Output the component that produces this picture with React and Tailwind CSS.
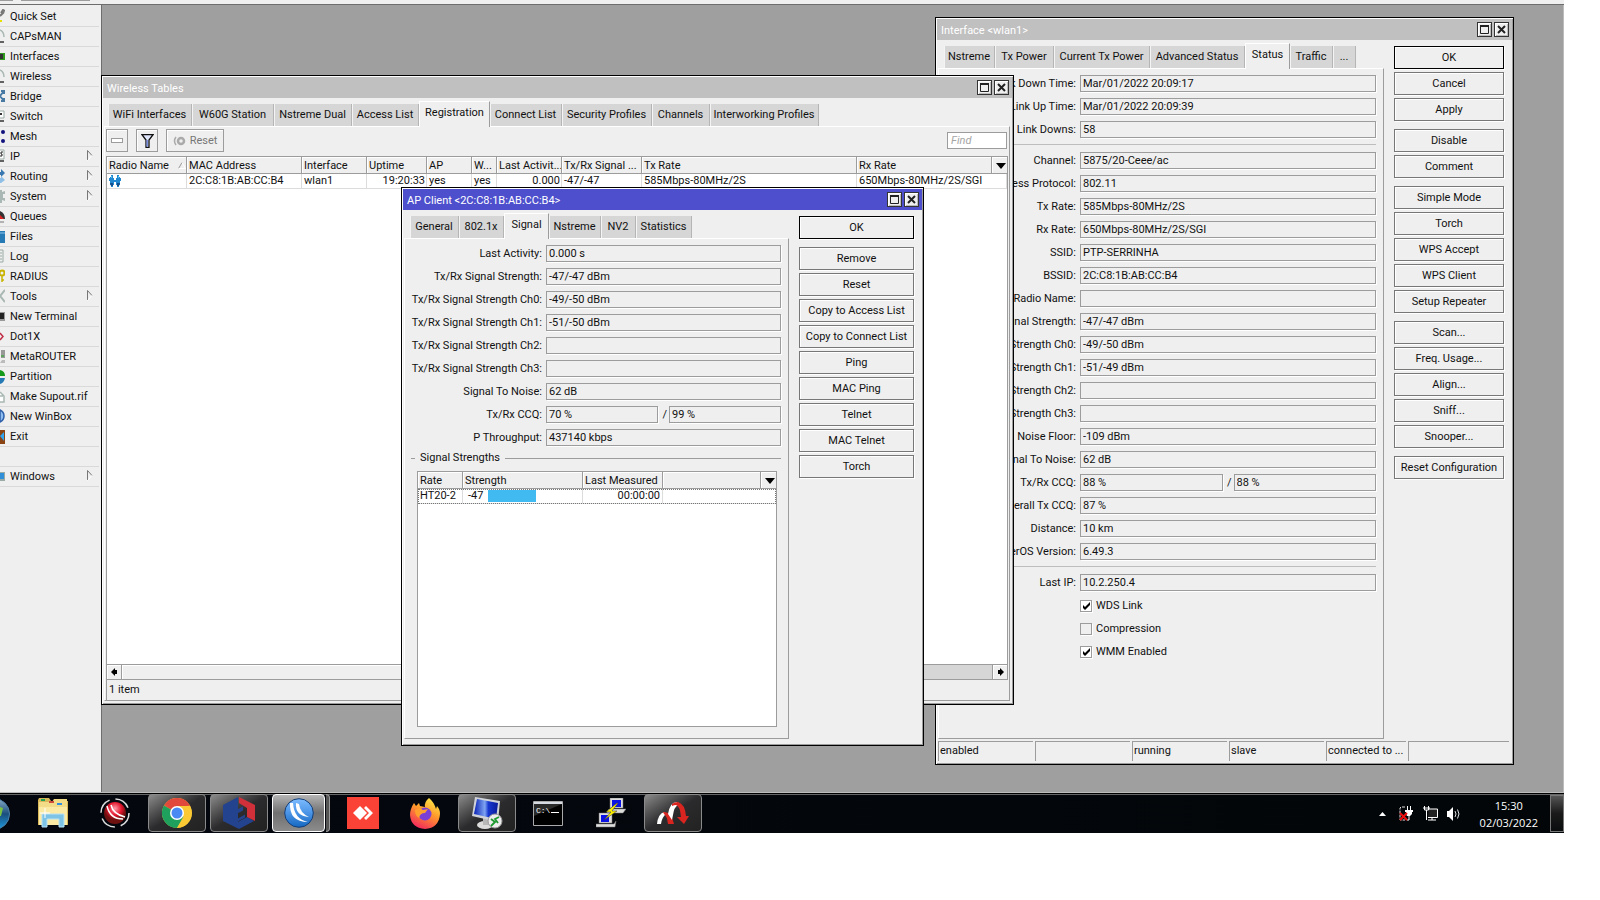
import React from 'react';
import clsx from 'clsx';

const ICONS = {
  quick: <><path d="M0 7l4-4M1 4l2-3 2 1" stroke="#777" strokeWidth="2" fill="none" /><path d="M0 12h2" stroke="#e6e000" strokeWidth="2" /></>,
  arc: <><path d="M0 1q4 2 4 7" stroke="#a9b8b4" strokeWidth="1.5" fill="none" /><path d="M0 13h4" stroke="#333" strokeWidth="1.5" /></>,
  card: <><path d="M0 4h5v7H0z" fill="#2f9a1c" /><path d="M0 5h3v5H0z" fill="#333" /></>,
  bridge: <path d="M0 7l4-5M0 7l4 5M1 2h3v3M1 12h3V9" stroke="#4779a3" strokeWidth="2" fill="none" />,
  box: <><path d="M0 2h4v7H0" fill="#fff" stroke="#9aaba6" /><path d="M0 5h2" stroke="#333" strokeWidth="2" /><path d="M0 12h4" stroke="#333" strokeWidth="1.5" /></>,
  mesh: <><circle cx="3" cy="3" r="2" fill="#12127e" /><circle cx="3" cy="12" r="2" fill="#12127e" /></>,
  ip: <><path d="M0 1h4v9H0" fill="#fff" stroke="#9aaba6" /><path d="M3 3H1v2h1v2H0" stroke="#222" fill="none" /><path d="M0 12h4" stroke="#333" strokeWidth="1.5" /></>,
  routing: <><path d="M0 3h1V0l4 4-4 4V6H0z" fill="#3a78b0" /><path d="M0 9h1V7l4 4-4 3H0z" fill="#8fbfe6" /></>,
  gear: <path d="M0 1h2v2l3-1v3H3v4h2v3l-3-1v3H0" fill="#a9b8b4" />,
  queues: <><path d="M0 2q5 2 5 8H0z" fill="#333" /><path d="M0 6l4 4H0z" fill="#d22" /><path d="M0 13h4" stroke="#777" /></>,
  files: <><path d="M0 2h5v12H0z" fill="#2579b5" /><path d="M0 4h5" stroke="#8cc4ea" /></>,
  log: <path d="M0 1h3v12H0M0 4h2M0 7h2M0 10h2" stroke="#9aaba6" fill="none" />,
  key: <><circle cx="2" cy="4" r="2.5" fill="none" stroke="#c8b400" strokeWidth="2" /><path d="M2 6v7M2 11h2" stroke="#c8b400" strokeWidth="1.5" /></>,
  tools: <path d="M5 1L0 7l5 6" stroke="#a9b8b4" strokeWidth="2" fill="none" />,
  term: <><path d="M0 3h5v9H0z" fill="#999" /><path d="M0 4h4v6H0z" fill="#222" /></>,
  dot: <path d="M0 4l3 3.500-3 3.500" stroke="#c23048" strokeWidth="1.5" fill="none" />,
  meta: <><path d="M1 1h4v8H1z" fill="#999" /><path d="M1 7h3" stroke="#2a2" /><path d="M0 14l2-3h3v3z" fill="#bbb" /></>,
  part: <><path d="M0 1q5 1 5 6H0z" fill="#159a1c" /><path d="M0 9h5q-1 5-5 6z" fill="#2579b5" /></>,
  sup: <path d="M0 3l4 4v6H0M0 7h3" stroke="#a9b8b4" strokeWidth="1.5" fill="#fff" />,
  winbox: <path d="M0 1q4 2 4 6t-4 6z" fill="#8ebdf2" stroke="#2e5fa8" strokeWidth="1.5" />,
  exit: <><path d="M0 1h5v14H0z" fill="#8a4413" /><path d="M0 7l4-4v9z" fill="#2fa3ee" /></>,
  win: <><path d="M0 3h5v9H0z" fill="#9aaba6" /><path d="M0 4h4v6H0z" fill="#2f8fd8" /></>,
};

const MENU = [
  ['Quick Set', 'quick'], ['CAPsMAN', 'arc'], ['Interfaces', 'card'], ['Wireless', 'arc'],
  ['Bridge', 'bridge'], ['Switch', 'box'], ['Mesh', 'mesh'], ['IP', 'ip', true],
  ['Routing', 'routing', true], ['System', 'gear', true], ['Queues', 'queues'], ['Files', 'files'],
  ['Log', 'log'], ['RADIUS', 'key'], ['Tools', 'tools', true], ['New Terminal', 'term'],
  ['Dot1X', 'dot'], ['MetaROUTER', 'meta'], ['Partition', 'part'], ['Make Supout.rif', 'sup'],
  ['New WinBox', 'winbox'], ['Exit', 'exit'], null, ['Windows', 'win', true],
];

const Sidebar = () => (
  <nav className="w-[102px] shrink-0 border-r border-[#6d6d6d] bg-[#efefef] pt-[2px] pr-[2px]">
    {MENU.map((item, i) => (
      <div key={i} className="h-5 border-b border-[#d9d9d9]">
        {item && (
          <button type="button" className="flex h-[19px] w-full items-center gap-[5px] text-left">
            <svg width="5" height="15" viewBox="0 0 5 15">{ICONS[item[1]]}</svg>
            <span className="flex-1">{item[0]}</span>
            {item[2] && (
              <svg width="6" height="11" viewBox="0 0 6 11" className="mr-[6px] mb-[2px]">
                <path d="M.5 10V.5l4.500 5" fill="none" stroke="#777" />
                <path d="M5 5.500L.5 10.500" stroke="#fff" />
              </svg>
            )}
          </button>
        )}
      </div>
    ))}
  </nav>
);

const TitleButton = ({ label, children }) => (
  <button type="button" aria-label={label} className="flex size-[15px] items-center justify-center border border-[#333] bg-[#efefef] shadow-[inset_1px_1px_0_#fff,inset_-1px_-1px_0_#bbb]">
    {children}
  </button>
);

const Window = ({ title, active, className, children }) => (
  <section className={clsx('absolute flex flex-col border border-black bg-[#efefef] shadow-[inset_1px_1px_0_#fff,inset_-1px_-1px_0_#9c9c9c]', className)}>
    <header className={clsx('mx-px mt-px flex h-[21px] shrink-0 items-center gap-[2px] pl-[4px] pr-[3px] text-white', active ? 'bg-[#4d4fcc]' : 'bg-[#c0c0c0]')}>
      <h2 className="flex-1 pt-[3px]">{title}</h2>
      <TitleButton label="Maximize">
        <svg width="9" height="9" viewBox="0 0 9 9"><path d="M.5 1h8M.5 0v8.500h8V0" stroke="#222" fill="none" /><path d="M0 1h9" stroke="#222" strokeWidth="2" /></svg>
      </TitleButton>
      <TitleButton label="Close">
        <svg width="9" height="9" viewBox="0 0 9 9"><path d="M1 1l7 7M8 1L1 8" stroke="#222" strokeWidth="2" /></svg>
      </TitleButton>
    </header>
    {children}
  </section>
);

const Tabs = ({ items, selected }) => (
  <div role="tablist" className="flex h-[28px] shrink-0 items-end pl-[6px]">
    {items.map(([name, width]) => (
      <button
        key={name}
        type="button"
        role="tab"
        aria-selected={name === selected}
        className={clsx(
          'relative whitespace-nowrap',
          width,
          name === selected
            ? '-mb-px h-[26px] border-l border-t border-r border-l-white border-t-white border-r-[#9c9c9c] bg-[#efefef] pb-[4px]'
            : 'h-[22px] border-r border-[#b5b5b5] bg-[#d6d6d6] shadow-[inset_1px_0_0_#f4f4f4]'
        )}
      >
        {name}
      </button>
    ))}
  </div>
);

const ValueBox = (props) => (
  <input readOnly {...props} className="h-[17px] w-0 min-w-0 flex-1 border border-[#9c9c9c] bg-[#efefef] px-[2px] text-[#111] shadow-[1px_1px_0_#fff] outline-none" />
);

const Field = ({ prefix, label, value, second, labelWidth }) => {
  const id = `${prefix}-${label.replace(/\W+/g, '-')}`;
  return (
    <div className="flex items-center">
      <label htmlFor={id} className={clsx('shrink-0 whitespace-nowrap pr-[4px] text-right', labelWidth)}>{label}:</label>
      <ValueBox id={id} value={value} />
      {second !== undefined && (
        <>
          <span className="w-[11px] pr-[2px] text-right">/</span>
          <ValueBox aria-label={`${label} rx`} value={second} />
        </>
      )}
    </div>
  );
};

const ButtonGroups = ({ groups, className }) => (
  <div className={clsx('flex shrink-0 flex-col gap-2', className)}>
    {groups.map((group) => (
      <div key={group[0]} className="flex flex-col gap-[3px]">
        {group.map((name) => (
          <button
            key={name}
            type="button"
            className={clsx('h-[23px] border pt-px whitespace-nowrap shadow-[inset_1px_1px_0_#fff,1px_1px_0_#fff]', name === 'OK' ? 'border-black' : 'border-[#777]')}
          >
            {name}
          </button>
        ))}
      </div>
    ))}
  </div>
);

const DownArrow = () => (
  <svg width="10" height="6" viewBox="0 0 10 6" className="mx-auto"><path d="M0 0h10L5 6z" fill="#000" /></svg>
);

const TH = 'h-[17px] overflow-hidden border-r border-b border-[#9c9c9c] bg-[#efefef] p-0 pt-px pl-[2px] text-left font-normal whitespace-nowrap shadow-[inset_1px_1px_0_#fff]';
const TD = 'h-[15px] overflow-hidden border-r border-b border-[#dcdcdc] p-0 pl-[2px] whitespace-nowrap leading-[14px]';

const STATUS_TABS = [
  ['Nstreme', 'w-[51px]'], ['Tx Power', 'w-[59px]'], ['Current Tx Power', 'w-[96px]'],
  ['Advanced Status', 'w-[95px]'], ['Status', 'w-[45px]'], ['Traffic', 'w-[43px]'], ['...', 'w-[23px]'],
];

const STATUS_FIELDS = [
  [['Last Link Down Time', 'Mar/01/2022 20:09:17'], ['Last Link Up Time', 'Mar/01/2022 20:09:39'], ['Link Downs', '58']],
  [
    ['Channel', '5875/20-Ceee/ac'], ['Wireless Protocol', '802.11'], ['Tx Rate', '585Mbps-80MHz/2S'],
    ['Rx Rate', '650Mbps-80MHz/2S/SGI'], ['SSID', 'PTP-SERRINHA'], ['BSSID', '2C:C8:1B:AB:CC:B4'],
    ['Radio Name', ''], ['Tx/Rx Signal Strength', '-47/-47 dBm'], ['Tx/Rx Signal Strength Ch0', '-49/-50 dBm'],
    ['Tx/Rx Signal Strength Ch1', '-51/-49 dBm'], ['Tx/Rx Signal Strength Ch2', ''], ['Tx/Rx Signal Strength Ch3', ''],
    ['Noise Floor', '-109 dBm'], ['Signal To Noise', '62 dB'], ['Tx/Rx CCQ', '88 %', '88 %'],
    ['Overall Tx CCQ', '87 %'], ['Distance', '10 km'], ['RouterOS Version', '6.49.3'],
  ],
  [['Last IP', '10.2.250.4']],
];

const STATUS_BUTTONS = [
  ['OK', 'Cancel', 'Apply'], ['Disable', 'Comment'],
  ['Simple Mode', 'Torch', 'WPS Accept', 'WPS Client', 'Setup Repeater'],
  ['Scan...', 'Freq. Usage...', 'Align...', 'Sniff...', 'Snooper...'], ['Reset Configuration'],
];

const Check = ({ label, checked }) => (
  <label className="flex h-[17px] items-center gap-1">
    <span className="relative flex size-3">
      <input type="checkbox" defaultChecked={checked} className="peer size-3 appearance-none border border-[#9c9c9c] bg-[#efefef] shadow-[1px_1px_0_#fff] checked:bg-white" />
      <svg viewBox="0 0 12 12" className="pointer-events-none absolute inset-0 hidden size-3 peer-checked:block"><path d="M3 5v3l2 2 5-5V2L5 7z" fill="#000" /></svg>
    </span>
    {label}
  </label>
);

const InterfaceWindow = () => (
  <Window title="Interface <wlan1>" className="top-[12px] left-[935px] h-[748px] w-[579px]">
    <div className="flex min-h-0 flex-1 pr-[9px] pl-[2px]">
      <div className="flex min-w-0 flex-1 flex-col">
        <Tabs items={STATUS_TABS} selected="Status" />
        <div className="flex flex-1 flex-col border border-t-white border-l-white border-r-[#9c9c9c] border-b-[#9c9c9c] pt-[6px] pr-[7px]">
          {STATUS_FIELDS.map((group, i) => (
            <div key={i} className={clsx('flex flex-col gap-[6px]', i > 0 && 'mt-[6px] border-t border-[#bdbdbd] pt-[7px]')}>
              {group.map(([label, value, second]) => (
                <Field key={label} prefix="if" label={label} value={value} second={second} labelWidth="w-[141px]" />
              ))}
            </div>
          ))}
          <div className="mt-[6px] flex flex-col gap-[6px] pl-[141px]">
            <Check label="WDS Link" checked />
            <Check label="Compression" />
            <Check label="WMM Enabled" checked />
          </div>
        </div>
      </div>
      <ButtonGroups groups={STATUS_BUTTONS} className="ml-[10px] w-[110px] pt-[6px]" />
    </div>
    <div className="mt-[2px] mr-[4px] mb-[3px] ml-[2px] flex h-[20px] shrink-0 gap-[2px]">
      {['enabled', '', 'running', 'slave', 'connected to ...', ''].map((text, i) => (
        <div key={i} className={clsx('truncate border-t border-l border-[#9c9c9c] pt-[2px] pl-px', i < 4 && 'w-[95px]', i === 4 && 'w-[80px]', i === 5 && 'flex-1')}>{text}</div>
      ))}
    </div>
  </Window>
);

const WIRELESS_TABS = [
  ['WiFi Interfaces', 'w-[84px]'], ['W60G Station', 'w-[82px]'], ['Nstreme Dual', 'w-[78px]'],
  ['Access List', 'w-[67px]'], ['Registration', 'w-[71px]'], ['Connect List', 'w-[72px]'],
  ['Security Profiles', 'w-[90px]'], ['Channels', 'w-[58px]'], ['Interworking Profiles', 'w-[109px]'],
];

const WIRELESS_COLS = [
  ['Radio Name', 'w-[80px]'], ['MAC Address', 'w-[115px]'], ['Interface', 'w-[65px]'], ['Uptime', 'w-[60px]'],
  ['AP', 'w-[45px]'], ['W...', 'w-[25px]'], ['Last Activit...', 'w-[65px]'], ['Tx/Rx Signal ...', 'w-[80px]'],
  ['Tx Rate', 'w-[215px]'], ['Rx Rate', ''],
];

const TOOL = 'flex h-[23px] items-center justify-center border border-[#9c9c9c] shadow-[inset_1px_1px_0_#fff]';

const WirelessWindow = () => (
  <Window title="Wireless Tables" className="top-[70px] left-[101px] h-[630px] w-[913px]">
    <Tabs items={WIRELESS_TABS} selected="Registration" />
    <div className="mr-[3px] mb-[3px] ml-[2px] flex min-h-0 flex-1 flex-col border border-t-white border-l-white border-r-[#9c9c9c] border-b-[#9c9c9c] pl-px">
      <div className="flex h-[29px] shrink-0 items-center gap-2 pr-[2px] pb-[2px]">
        <button type="button" aria-label="Remove" className={clsx(TOOL, 'w-[22px]')}>
          <span className="h-[5px] w-3 border border-[#9c9c9c] bg-white" />
        </button>
        <button type="button" aria-label="Filter" className={clsx(TOOL, 'w-[22px]')}>
          <svg width="13" height="14" viewBox="0 0 13 14"><path d="M1 .7h11L8 6v7.300H5V6z" fill="#dfe5fb" stroke="#111" strokeWidth="1.300" /><path d="M5.500 6h1.500v6.500H5.500z" fill="#7c90e0" /></svg>
        </button>
        <button type="button" className={clsx(TOOL, 'w-[58px] gap-1 text-[#777]')}>
          <svg width="13" height="10" viewBox="0 0 13 10"><path d="M3 1Q0 5 3 9" stroke="#aaa" strokeWidth="1.500" fill="none" /><circle cx="8" cy="5" r="3" fill="none" stroke="#aaa" strokeWidth="2.500" /></svg>
          Reset
        </button>
        <span className="flex-1" />
        <input placeholder="Find" aria-label="Find" className="h-[17px] w-[60px] border border-[#9c9c9c] bg-white px-[3px] italic placeholder:text-[#a5a5a5]" />
      </div>
      <div className="mr-px flex min-h-0 flex-1 flex-col border border-b-0 border-[#9c9c9c] bg-white">
        <table className="w-full table-fixed border-separate border-spacing-0">
          <thead>
            <tr>
              {WIRELESS_COLS.map(([name, width], i) => (
                <th key={name} className={clsx(TH, width)}>
                  {name}
                  {i === 0 && <svg width="8" height="7" viewBox="0 0 8 7" className="ml-[9px] inline align-baseline"><path d="M.5 6.500L4 .5" stroke="#999" fill="none" /><path d="M4 .5l3.500 6H.5" stroke="#fff" fill="none" /></svg>}
                </th>
              ))}
              <th className={clsx(TH, 'w-[15px] border-r-0 pl-0')}><DownArrow /></th>
            </tr>
          </thead>
          <tbody>
            <tr>
              <td className={TD}>
                <svg width="12" height="12" viewBox="0 0 12 12">
                  <path d="M2 0h2v3h1v2h2V3h1V0h2v2h1v1h1v3h-1v4h-1v2H8v-2H7V7H5v3H4v2H2v-2H1V6H0V3h1V2h1z" fill="#2288cf" />
                  <path d="M2 1h1v2H2zM9 1h1v2H9z" fill="#5cc4f5" />
                  <path d="M1 8h3v3H2zM8 8h3l-1 3H8z" fill="#15508c" />
                </svg>
              </td>
              <td className={TD}>2C:C8:1B:AB:CC:B4</td>
              <td className={TD}>wlan1</td>
              <td className={clsx(TD, 'pr-px text-right')}>19:20:33</td>
              <td className={TD}>yes</td>
              <td className={TD}>yes</td>
              <td className={clsx(TD, 'pr-px text-right')}>0.000</td>
              <td className={TD}>-47/-47</td>
              <td className={TD}>585Mbps-80MHz/2S</td>
              <td className={TD} colSpan={2}>650Mbps-80MHz/2S/SGI</td>
            </tr>
          </tbody>
        </table>
      </div>
      <div className="mr-px flex h-4 shrink-0 border border-[#9c9c9c] bg-[#d6d6d6]">
        <button type="button" aria-label="Scroll left" className="flex w-[15px] items-center justify-center border-r border-[#9c9c9c] bg-[#efefef] shadow-[inset_1px_1px_0_#fff]">
          <svg width="7" height="8" viewBox="0 0 7 8"><path d="M0 4l4-4v2h2v4H4v2z" /></svg>
        </button>
        <span className="w-[85%] bg-[#efefef] shadow-[inset_1px_1px_0_#fff]" />
        <span className="flex-1" />
        <button type="button" aria-label="Scroll right" className="flex w-[15px] items-center justify-center border-l border-[#9c9c9c] bg-[#efefef] shadow-[inset_1px_1px_0_#fff]">
          <svg width="7" height="8" viewBox="0 0 7 8"><path d="M7 4L3 0v2H1v4h2v2z" /></svg>
        </button>
      </div>
      <p className="mr-px h-[20px] shrink-0 border-l border-[#9c9c9c] pt-[3px] pl-[2px]">1 item</p>
    </div>
  </Window>
);

const CLIENT_TABS = [
  ['General', 'w-[49px]'], ['802.1x', 'w-[45px]'], ['Signal', 'w-[45px]'],
  ['Nstreme', 'w-[52px]'], ['NV2', 'w-[35px]'], ['Statistics', 'w-[56px]'],
];

const CLIENT_FIELDS = [
  ['Last Activity', '0.000 s'], ['Tx/Rx Signal Strength', '-47/-47 dBm'],
  ['Tx/Rx Signal Strength Ch0', '-49/-50 dBm'], ['Tx/Rx Signal Strength Ch1', '-51/-50 dBm'],
  ['Tx/Rx Signal Strength Ch2', ''], ['Tx/Rx Signal Strength Ch3', ''],
  ['Signal To Noise', '62 dB'], ['Tx/Rx CCQ', '70 %', '99 %'], ['P Throughput', '437140 kbps'],
];

const CLIENT_BUTTONS = [
  ['OK'],
  ['Remove', 'Reset', 'Copy to Access List', 'Copy to Connect List', 'Ping', 'MAC Ping', 'Telnet', 'MAC Telnet', 'Torch'],
];

const ClientWindow = () => (
  <Window active title="AP Client <2C:C8:1B:AB:CC:B4>" className="top-[182px] left-[401px] h-[559px] w-[523px]">
    <div className="flex min-h-0 flex-1 pr-[9px] pb-[6px] pl-[2px]">
      <div className="flex min-w-0 flex-1 flex-col">
        <Tabs items={CLIENT_TABS} selected="Signal" />
        <div className="flex min-h-0 flex-1 flex-col border border-t-white border-l-white border-r-[#9c9c9c] border-b-[#9c9c9c] pt-[6px] pr-[7px] pb-[11px]">
          <div className="flex flex-col gap-[6px]">
            {CLIENT_FIELDS.map(([label, value, second]) => (
              <Field key={label} prefix="ap" label={label} value={value} second={second} labelWidth="w-[141px]" />
            ))}
          </div>
          <div className="mt-[5px] flex items-center gap-[5px] pl-[6px]">
            <span className="h-px w-[4px] bg-[#9c9c9c]" />
            <h3>Signal Strengths</h3>
            <span className="h-px flex-1 bg-[#9c9c9c]" />
          </div>
          <div className="mt-[6px] mr-[4px] ml-[12px] flex-1 border border-[#9c9c9c] bg-white">
            <table className="w-full table-fixed border-separate border-spacing-0">
              <thead>
                <tr>
                  <th className={clsx(TH, 'w-[45px]')}>Rate</th>
                  <th className={clsx(TH, 'w-[120px]')}>Strength</th>
                  <th className={clsx(TH, 'w-[80px]')}>Last Measured</th>
                  <th className={TH} aria-label="Blank" />
                  <th className={clsx(TH, 'w-[15px] border-r-0 pl-0')}><DownArrow /></th>
                </tr>
              </thead>
              <tbody className="outline-1 -outline-offset-1 outline-dotted outline-[#777]">
                <tr>
                  <td className={TD}>HT20-2</td>
                  <td className={TD}>
                    <div className="flex items-center gap-[5px] pl-[3px]">-47<span className="h-3 w-12 bg-[#40baf1]" /></div>
                  </td>
                  <td className={clsx(TD, 'pr-[2px] text-right')}>00:00:00</td>
                  <td className={clsx(TD, 'border-r-0')} colSpan={2} />
                </tr>
              </tbody>
            </table>
          </div>
        </div>
      </div>
      <ButtonGroups groups={CLIENT_BUTTONS} className="ml-[10px] w-[115px] pt-[6px]" />
    </div>
  </Window>
);

const Explorer = () => (
  <svg width="32" height="30" viewBox="0 0 32 30">
    <path d="M1 2l1-2h10l2 3h17v24H1z" fill="#d9b85a" />
    <path d="M2 4h13l2-3h13v26H2z" fill="#f3dc87" />
    <path d="M2 9h28v18H2z" fill="#fbeaa4" />
    <path d="M4 1h4v2H4z" fill="#23a455" /><path d="M12 3h5v2h-5z" fill="#cf4b39" /><path d="M20 5h5v2h-5z" fill="#2f8fe0" />
    <path d="M5 16h22v13h-5v-8H10v8H5z" fill="#7cc3e6" stroke="#b9e3f5" />
    <path d="M8 10v10M3 15h10" stroke="#fff" />
  </svg>
);

const RedSwoosh = () => (
  <svg width="30" height="30" viewBox="0 0 30 30">
    <defs><radialGradient id="red" cx=".5" cy=".3"><stop offset="0" stopColor="#ff9aa8" /><stop offset=".6" stopColor="#e2142c" /><stop offset="1" stopColor="#6d1010" /></radialGradient></defs>
    <circle cx="15" cy="15" r="14" fill="none" stroke="#ddd" strokeWidth="1.500" strokeDasharray="16 6" />
    <circle cx="15" cy="15" r="11" fill="url(#red)" />
    <path d="M7 8q3 13 16 13M11 7q2 9 14 12" stroke="#fff" strokeWidth="1.500" fill="none" />
  </svg>
);

const Chrome = () => (
  <svg width="30" height="30" viewBox="0 0 30 30">
    <circle cx="15" cy="15" r="15" fill="#fbc934" />
    <path d="M2 7.500A15 15 0 0 1 28 7.500L15 9z" fill="#e0493b" />
    <path d="M2 7.500h26L15 15z" fill="#e0493b" />
    <path d="M2 7.500A15 15 0 0 0 15 30l6.500-11.500L15 15z" fill="#1fa15d" />
    <path d="M28 8H15l7 11-7 11A15 15 0 0 0 28 8z" fill="#fbc934" />
    <circle cx="15" cy="15" r="7" fill="#fff" /><circle cx="15" cy="15" r="5.500" fill="#4889f4" />
  </svg>
);

const Hexagon = () => (
  <svg width="32" height="32" viewBox="0 0 32 32">
    <path d="M15 0v6L7 11v9l8 4.500 7-4v-3l-7 4-3-2v-2l8-4v-4l-8 4v-2l3-2V0L0 8v16l16 8 15-8-7-4-9 5z" fill="#24438e" />
    <path d="M16 0l16 8v16l-8-4v-9l-8-5z" fill="#d0303a" />
  </svg>
);

const WinboxLogo = () => (
  <svg width="30" height="30" viewBox="0 0 30 30">
    <defs><linearGradient id="wb" x1="0" y1="0" x2="0" y2="1"><stop offset="0" stopColor="#7dbcff" /><stop offset=".5" stopColor="#4b94e6" /><stop offset="1" stopColor="#1467c0" /></linearGradient></defs>
    <circle cx="15" cy="15" r="14.300" fill="url(#wb)" stroke="#153e78" />
    <path d="M6 5q-1 19 18 19Q10 21 9 5zM12 5q-1 13 13 14Q16 15 15 6z" fill="#fff" />
  </svg>
);

const AnyDesk = () => (
  <svg width="32" height="32" viewBox="0 0 32 32">
    <path d="M0 0h32v32H0z" fill="#fb4236" />
    <path d="M13 9l7 7-7 7-7-7z" fill="#fff" />
    <path d="M17 11l2-2 7 7-7 7-2-2 5-5z" fill="#fff" />
  </svg>
);

const Firefox = () => (
  <svg width="30" height="31" viewBox="0 0 30 31">
    <defs><linearGradient id="ff" x1=".8" y1="0" x2=".3" y2="1"><stop offset="0" stopColor="#fff04a" /><stop offset=".45" stopColor="#ff9a2b" /><stop offset="1" stopColor="#f2265e" /></linearGradient></defs>
    <path d="M19 0q-5 4-4 9l-5-1-1-3-3 3-2-3q-4 6-4 12 1 13 15 14 14-1 15-15 0-5-3-8l-1 3q-2-7-7-11z" fill="url(#ff)" />
    <circle cx="15" cy="16" r="6.500" fill="#7b3fd6" />
    <path d="M5 12q5-3 8 0l5-1-3 4q-5 0-6 5-4-2-4-8z" fill="#ffa02e" />
  </svg>
);

const RemoteDesktop = () => (
  <svg width="31" height="32" viewBox="0 0 31 32">
    <defs><linearGradient id="rd"><stop offset="0" stopColor="#0a22b4" /><stop offset=".45" stopColor="#7fa4f2" /><stop offset=".6" stopColor="#1737d0" /><stop offset="1" stopColor="#0a1c9a" /></linearGradient></defs>
    <ellipse cx="13" cy="28" rx="8" ry="4" fill="#dcdcdc" />
    <path d="M11 21h6l1 7h-7z" fill="#b8b8b8" />
    <path d="M3 0l25 4-2 21L0 19z" fill="#cfd3d8" />
    <path d="M5 2l21 4-2 16L2 17z" fill="url(#rd)" />
    <circle cx="23" cy="24" r="7" fill="#eee" stroke="#999" />
    <path d="M19 22l4 3-4 4M27 20l-4 2 3 4" stroke="#1f9a31" strokeWidth="1.800" fill="none" />
  </svg>
);

const Cmd = () => (
  <svg width="30" height="25" viewBox="0 0 30 25" className="mr-[2px]">
    <path d="M.5.5h29v24H.5z" fill="#000" stroke="#aaa" />
    <path d="M1 1h28v2H1z" fill="#d6dbe4" />
    <path d="M1 3h28L1 15z" fill="#2a2a2a" />
    <text x="3" y="12" fill="#fff" fontSize="8" fontFamily="Liberation Mono, monospace">C:\</text>
    <path d="M18 11.500h8" stroke="#fff" />
  </svg>
);

const Putty = () => (
  <svg width="30" height="30" viewBox="0 0 30 30">
    <path d="M14 0h13v10H14zM11 14l2-3h17l-3 4H11zM3 15h13v10H3zM0 29v-3h18l2-3-1 6z" fill="#ddd" stroke="#777" strokeWidth=".5" />
    <path d="M16 2h9v7h-9zM5 17h8v7H5z" fill="#0b12e6" />
    <path d="M21 5l-11 9h5l-7 8 13-9h-5l6-8z" fill="#fff200" stroke="#333" strokeWidth=".5" />
  </svg>
);

const Arcs = () => (
  <svg width="32" height="23" viewBox="0 0 32 23">
    <path d="M0 22Q1 12 7 10l2 2Q5 15 4 22z" fill="#fff" />
    <path d="M6 10q8-1 11 12h-6q-1-8-4-10z" fill="#d92520" />
    <path d="M11 12Q13 0 20 0l1 3q-4 2-5 10l-1 5z" fill="#fff" />
    <path d="M15 2q2-2 6-2 7 2 8 14h3l-5 8-7-7h4Q23 4 19 3q-2 0-4 1z" fill="#d92520" />
  </svg>
);

const APPS = [
  ['Explorer', Explorer], ['Monitor', RedSwoosh], ['Chrome', Chrome, 'open'], ['Editor', Hexagon, 'open'],
  ['WinBox', WinboxLogo, 'front'], ['AnyDesk', AnyDesk], ['Firefox', Firefox], ['Remote Desktop', RemoteDesktop, 'open'],
  ['Command Prompt', Cmd], ['PuTTY', Putty], ['Router', Arcs, 'open'],
];

const Taskbar = () => (
  <footer className="flex h-10 shrink-0 items-stretch border-t border-black bg-gradient-to-r from-[#05070f] to-[#020608] text-white shadow-[inset_0_1px_0_#666]">
    <button type="button" aria-label="Start" className="flex w-6 items-center">
      <svg width="11" height="32" viewBox="0 0 11 32">
        <defs><linearGradient id="orb" x1="0" y1="0" x2="0" y2="1"><stop offset="0" stopColor="#8caec8" /><stop offset=".5" stopColor="#1a4e7c" /><stop offset="1" stopColor="#1e9be0" /></linearGradient></defs>
        <circle cx="-6" cy="16" r="15.500" fill="url(#orb)" stroke="#4a7fa8" />
        <path d="M0 9l3 1-2 8H0z" fill="#7cc242" />
      </svg>
    </button>
    <div className="flex gap-1 pb-px">
      {APPS.map(([name, Icon, state]) => (
        <div key={name} className="flex w-[58px]">
          <button
            type="button"
            aria-label={name}
            className={clsx(
              'flex flex-1 items-center justify-center',
              state === 'open' && 'rounded-sm border border-[#8a8a8a] bg-gradient-to-br from-[#8c8c8c] via-[#2b2b2d] to-[#222]',
              state === 'front' && 'rounded-sm border border-white bg-gradient-to-b from-[#b5b5b5] via-[#707070] to-[#8c8c8c]'
            )}
          >
            <Icon />
          </button>
          {state === 'front' && <span className="ml-px w-1 rounded-r-sm border border-l-0 border-[#999] bg-[#555]" />}
        </div>
      ))}
    </div>
    <span className="flex-1" />
    <div className="flex items-center">
      <button type="button" aria-label="Show hidden icons" className="mr-[13px]">
        <svg width="7" height="4" viewBox="0 0 7 4"><path d="M0 4l3.500-4L7 4z" fill="#fff" /></svg>
      </button>
      <svg width="14" height="15" viewBox="0 0 14 15" className="mr-[10px]">
        <path d="M6 1H2L1 2v12h5" fill="none" stroke="#ddd" strokeDasharray="3 1" />
        <path d="M8.500 0v4M11.500 0v4" stroke="#fff" /><path d="M6 4h8v2h-1v2l-2 2H8L7 8V6H6z" fill="#fff" /><path d="M10 9v5H8" stroke="#fff" fill="none" />
        <path d="M1 7l7 7M8 7l-7 7" stroke="#f00d0d" strokeWidth="2" />
      </svg>
      <svg width="15" height="15" viewBox="0 0 15 15" className="mr-[9px]">
        <path d="M5.500 3h9v8.500H5" fill="#222" stroke="#fff" /><path d="M5 14h8M9 12v2" stroke="#fff" />
        <path d="M1.500 0v4h4V0M3.500 4v10M0 2h7" stroke="#fff" fill="none" />
      </svg>
      <svg width="14" height="14" viewBox="0 0 14 14" className="mr-[19px]">
        <path d="M0 4h2l4-4v14l-4-4H0z" fill="#fff" />
        <path d="M8 4q2 3 0 6M10.500 2.500q3 4.500 0 9" stroke="#ddd" fill="none" />
      </svg>
      <time className="mr-3 text-center font-['Open_Sans',sans-serif] text-[11px] leading-[17px]">15:30<br />02/03/2022</time>
    </div>
    <button type="button" aria-label="Show desktop" className="my-px w-[14px] border border-[#777] bg-gradient-to-b from-[#555] via-[#1a1a1a] to-[#0a0d0e]" />
  </footer>
);

export default function App() {
  return (
    <div className="flex h-screen flex-col bg-white pr-9 pb-[67px] font-['Roboto',sans-serif] text-[11px] leading-[14px] text-[#111]">
      <div className="flex h-[5px] shrink-0 items-start gap-2 border-b border-[#6d6d6d] bg-[#efefef]">
        <span className="h-px w-[13px] bg-[#9c9c9c]" />
        <span className="h-px w-[69px] bg-[#9c9c9c]" />
      </div>
      <div className="relative flex min-h-0 flex-1 overflow-hidden border-r border-b border-[#bdbdbd] bg-[#9f9f9f]">
        <Sidebar />
        <main className="flex-1">
          <InterfaceWindow />
          <WirelessWindow />
          <ClientWindow />
        </main>
      </div>
      <Taskbar />
    </div>
  );
}
